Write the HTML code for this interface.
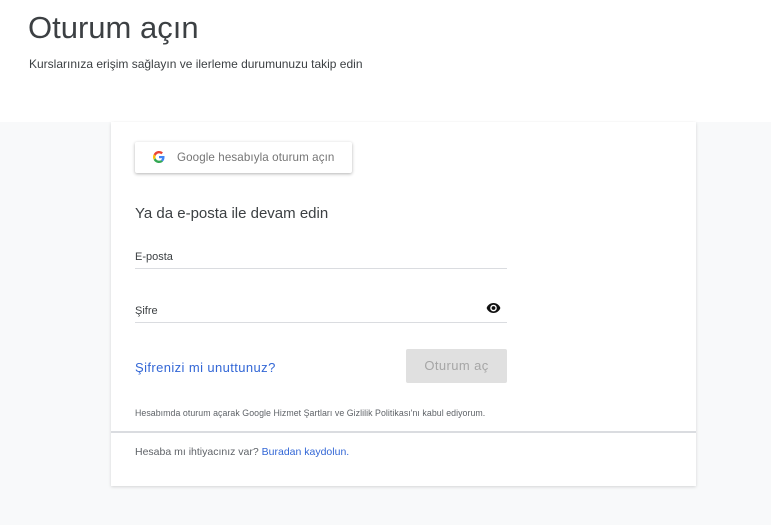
<!DOCTYPE html>
<html><head><meta charset="utf-8"><style>
*{margin:0;padding:0;box-sizing:border-box}
body{width:771px;height:525px;overflow:hidden;background:#fff;font-family:"Liberation Sans",sans-serif;position:relative}
.bg{position:absolute;left:0;top:122px;width:771px;height:403px;background:#f8f9fa}
.abs{position:absolute;white-space:nowrap}
.card{position:absolute;left:111px;top:122px;width:585px;height:364px;background:#fff;box-shadow:0 1px 3px rgba(0,0,0,.15)}
</style></head><body>
<div class="bg"></div>
<div class="abs" style="left:28px;top:10px;font-size:31px;color:#3c4043">Oturum açın</div>
<div class="abs" style="left:29px;top:57px;font-size:12px;color:#3c4043">Kurslarınıza erişim sağlayın ve ilerleme durumunuzu takip edin</div>
<div class="card">
 <div class="abs" style="left:24px;top:20px;width:217px;height:31px;background:#fff;box-shadow:0 1px 3px rgba(0,0,0,.3);border-radius:2px"></div>
 <svg class="abs" style="left:42px;top:29px" width="12" height="12" viewBox="0 0 48 48"><path fill="#EA4335" d="M24 9.5c3.5 0 6.6 1.2 9.1 3.6l6.8-6.8C35.8 2.4 30.3 0 24 0 14.6 0 6.6 5.4 2.7 13.3l7.9 6.2C12.5 13.7 17.8 9.5 24 9.5z"/><path fill="#4285F4" d="M46.1 24.5c0-1.6-.1-3.1-.4-4.5H24v9h12.4c-.5 2.900-2.2 5.3-4.6 7l7.5 5.8c4.4-4 6.8-10 6.8-17.3z"/><path fill="#FBBC05" d="M10.5 28.6c-.5-1.4-.8-3-.8-4.6s.3-3.2.8-4.6l-7.9-6.2C1 16.5 0 20.1 0 24s1 7.5 2.7 10.7l7.8-6.1z"/><path fill="#34A853" d="M24 48c6.500 0 11.9-2.1 15.9-5.8l-7.5-5.8c-2.1 1.4-4.8 2.3-8.4 2.3-6.2 0-11.5-4.2-13.4-9.9l-7.9 6.1C6.6 42.6 14.6 48 24 48z"/></svg>
 <div class="abs" style="left:66px;top:29px;font-size:11.6px;color:#757575;letter-spacing:.1px">Google hesabıyla oturum açın</div>
 <div class="abs" style="left:24px;top:83px;font-size:15px;color:#3c4043">Ya da e-posta ile devam edin</div>
 <div class="abs" style="left:24px;top:129px;font-size:11px;color:#3c4043">E-posta</div>
 <div class="abs" style="left:24px;top:146px;width:372px;height:1px;background:#dadce0"></div>
 <div class="abs" style="left:24px;top:183px;font-size:11px;color:#3c4043">Şifre</div>
 <svg class="abs" style="left:375px;top:180px" width="15" height="12" viewBox="0 0 24 18"><path d="M12 1C7 1 2.7 4.1 1 9c1.7 4.9 6 8 11 8s9.3-3.1 11-8c-1.7-4.9-6-8-11-8zm0 13.3a5.3 5.3 0 1 1 0-10.6 5.3 5.3 0 0 1 0 10.6zM12 6a3 3 0 1 0 0 6 3 3 0 0 0 0-6z" fill="#111"/></svg>
 <div class="abs" style="left:24px;top:200px;width:372px;height:1px;background:#dadce0"></div>
 <div class="abs" style="left:24px;top:238px;font-size:13px;color:#3367d6;letter-spacing:.4px">Şifrenizi mi unuttunuz?</div>
 <div class="abs" style="left:295px;top:227px;width:101px;height:34px;background:#e0e0e0;border-radius:2px;color:#a6a6a6;font-size:13px;text-align:center;line-height:34px;letter-spacing:.4px">Oturum aç</div>
 <div class="abs" style="left:24px;top:286px;font-size:8.8px;color:#5f6368;letter-spacing:.05px">Hesabımda oturum açarak Google Hizmet Şartları ve Gizlilik Politikası'nı kabul ediyorum.</div>
 <div class="abs" style="left:0;top:309px;width:585px;height:2px;background:#dadce0"></div>
 <div class="abs" style="left:24px;top:324px;font-size:10.5px;color:#5f6368">Hesaba mı ihtiyacınız var? <span style="color:#3367d6">Buradan kaydolun.</span></div>
</div>
</body></html>
